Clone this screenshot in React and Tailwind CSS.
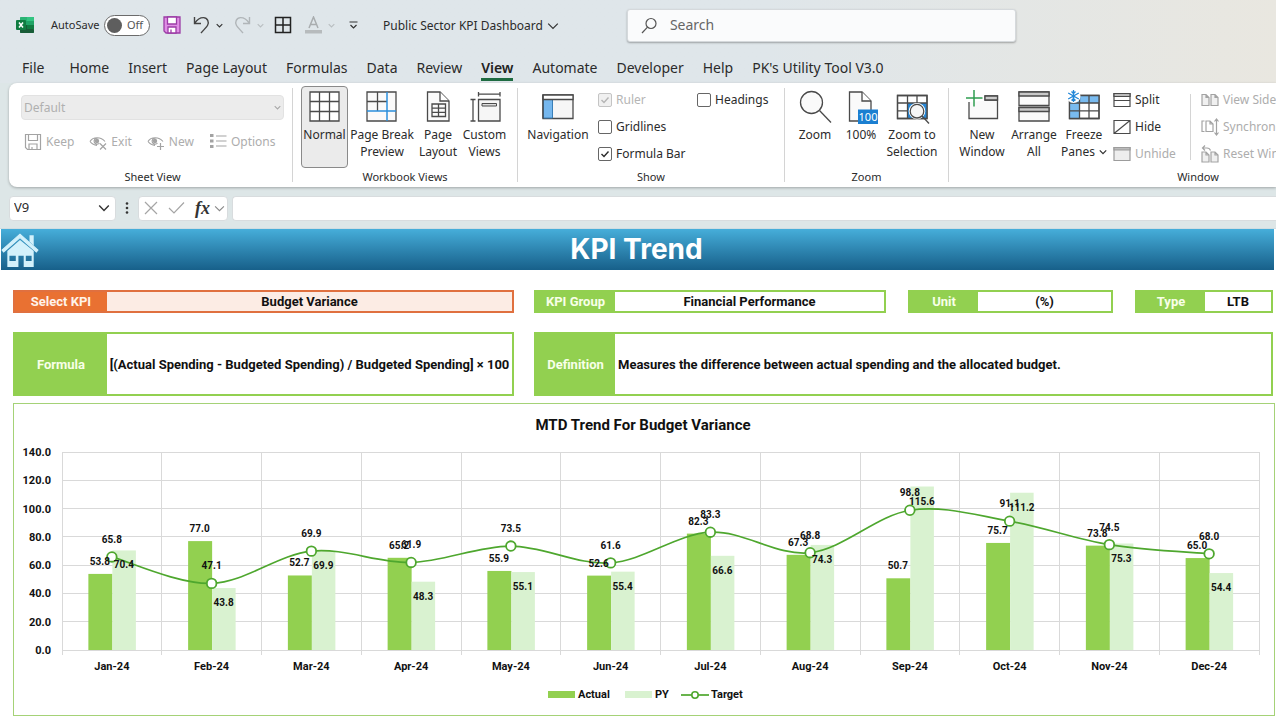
import React from "react";

const INK = "#4a4a4a";
const GREEN = "#92d050";

/* ---------- title bar ---------- */

function Chevron({ size = 10, color = "#333", width = 1.2 }) {
  return (
    <svg width={size} height={size} viewBox="0 0 10 10" fill="none" stroke={color} strokeWidth={width} className="shrink-0" aria-hidden="true">
      <path d="M1 3l4 4 4-4" />
    </svg>
  );
}

function ExcelLogo() {
  return (
    <svg width="18" height="18" viewBox="0 0 18 18" aria-hidden="true" className="shrink-0">
      <rect x="4" y="1" width="14" height="16" rx="1" fill="#21a366" />
      <rect x="4" y="1" width="7" height="4" fill="#33c481" opacity="0.5" />
      <rect x="11" y="1" width="7" height="4" fill="#33c481" />
      <rect x="4" y="9" width="7" height="4" fill="#185c37" />
      <rect x="11" y="9" width="7" height="4" fill="#107c41" />
      <rect x="4" y="13" width="14" height="4" rx="1" fill="#185c37" />
      <rect x="0" y="4" width="10" height="10" rx="1" fill="#107c41" />
      <path d="M3 6.5l4 5M7 6.5l-4 5" stroke="#fff" strokeWidth="1.5" />
    </svg>
  );
}

function TitleBar() {
  return (
    <header className="flex h-[50px] items-center pl-4">
      <ExcelLogo />
      <span id="autosave" className="ml-[17px] w-[47px] whitespace-nowrap text-[11px]">AutoSave</span>
      <button role="switch" aria-checked="false" aria-labelledby="autosave" className="ml-[6px] flex h-[21px] w-[46px] items-center gap-[5px] rounded-full border border-[#6b6b6b] bg-white pl-[2px] text-[11px] text-[#555]">
        <span className="h-[15px] w-[15px] rounded-full bg-[#5e5e5e]" />
        Off
      </button>
      <button aria-label="Save" className="ml-[13px]">
        <svg width="18" height="18" viewBox="0 0 18 18" fill="none" stroke="#9c3da6" strokeWidth="1.3">
          <path d="M1 1h16v16H3l-2-2z" fill="#e08fe6" />
          <path d="M4.5 1v7h9V1z" fill="#fff" />
          <path d="M5 17v-6h8v6z" fill="#fff" />
          <path d="M8 17v-3.500" />
        </svg>
      </button>
      <button aria-label="Undo" className="ml-3">
        <svg width="17" height="18" viewBox="0 0 17 18" fill="none" stroke="#444" strokeWidth="1.400">
          <path d="M1.500 1v6.500h6.500M1.800 7.200C4 3.800 7 1.500 10.500 1.600c4 .2 6 4.500 4 7.900-1.200 2-4 4.500-6.500 7.500" />
        </svg>
      </button>
      <button aria-label="Undo history" className="ml-[6px]"><Chevron size={7} width={1.600} /></button>
      <button aria-label="Redo" disabled className="ml-[11px]">
        <svg width="17" height="18" viewBox="0 0 17 18" fill="none" stroke="#b0b5b8" strokeWidth="1.400">
          <path d="M15.500 1v6.500H9M15.200 7.200C13 3.800 10 1.500 6.500 1.600c-4 .2-6 4.500-4 7.900 1.200 2 4 4.500 6.500 7.500" />
        </svg>
      </button>
      <button aria-label="Redo history" disabled className="ml-[6px]"><Chevron size={7} color="#b9bec1" width={1.600} /></button>
      <button aria-label="Borders" className="ml-[10px]">
        <svg width="18" height="18" viewBox="0 0 18 18" fill="none" stroke="#222" strokeWidth="1.500">
          <path d="M1.500 1.500h15v15h-15zM9 1.500v15M1.500 9h15" />
        </svg>
      </button>
      <button aria-label="Font color" disabled className="ml-[13px]">
        <svg width="17" height="18" viewBox="0 0 17 18" fill="none" stroke="#a9adaf" strokeWidth="1.500">
          <path d="M4 12L8.500 1 13 12M5.500 8.500h6" />
          <rect x="0" y="14" width="17" height="3.500" fill="#b7bbbd" stroke="none" />
        </svg>
      </button>
      <button aria-label="Font color options" disabled className="ml-[6px]"><Chevron size={7} color="#b9bec1" width={1.600} /></button>
      <button aria-label="Customize toolbar" className="ml-[14px]">
        <svg width="9" height="10" viewBox="0 0 9 10" fill="none" stroke="#333" strokeWidth="1.200">
          <path d="M.5 2h8M1.500 5l3 3 3-3" />
        </svg>
      </button>
      <button className="ml-[25px] flex items-center gap-1 whitespace-nowrap pt-[2px] text-xs">
        Public Sector KPI Dashboard
        <Chevron size={12} width={1} />
      </button>
      <label className="ml-[68px] flex h-[33px] w-[389px] items-center rounded-[3px] border border-[#d5d9dc] bg-[#fafbfc] pl-[13px] shadow-[0_1px_2px_rgba(0,0,0,0.3)]">
        <svg width="17" height="17" viewBox="0 0 17 17" fill="none" stroke="#555" strokeWidth="1.200" className="shrink-0" aria-hidden="true">
          <circle cx="10" cy="6.500" r="5" />
          <path d="M6.500 10.200L1 16" />
        </svg>
        <input type="search" aria-label="Search" placeholder="Search" className="ml-3 min-w-0 flex-1 bg-transparent pb-px text-[14px] outline-none placeholder:text-[#666]" />
      </label>
    </header>
  );
}

const TABS = ["Home", "Insert", "Page Layout", "Formulas", "Data", "Review", "View", "Automate", "Developer", "Help", "PK's Utility Tool V3.0"];

function Tabs() {
  return (
    <nav className="flex h-[33px] items-start gap-[19px] whitespace-nowrap pl-[22px] pt-[7px] text-[14px] leading-[21px]">
      <button className="mr-[6px]">File</button>
      {TABS.map((t) => (
        <button key={t} className={t === "View" ? "border-b-[3px] border-[#1e6b41] font-semibold text-[#222]" : ""}>
          {t}
        </button>
      ))}
    </nav>
  );
}

/* ---------- ribbon icons, all on a 34 x 36 field ---------- */

function Big({ children }) {
  return (
    <svg width="34" height="36" viewBox="0 0 34 36" fill="none" stroke={INK} strokeWidth="1.300" className="shrink-0 overflow-visible" aria-hidden="true">
      {children}
    </svg>
  );
}

const NormalIcon = (
  <Big>
    <path d="M2 2h29v29H2z" fill="#fff" />
    <path d="M11.500 2v29M21.500 2v29M2 11.500h29M2 21.500h29" />
  </Big>
);
const PageBreakIcon = (
  <Big>
    <path d="M2 2h29v29H2z" fill="#fafafa" />
    <path d="M12.500 2v19M2 11.500h20" />
    <path d="M22 2v29M2 21h29" stroke="#2b8fdc" strokeWidth="1.500" />
  </Big>
);
const PageLayoutIcon = (
  <Big>
    <path d="M6.500 2H19l9 9v20H6.500z" fill="#fafafa" />
    <path d="M19 2v9h9" fill="#fff" />
    <path d="M11 14h13.500v12.500H11zM17.500 14v12.500M11 18.200h13.500M11 22.400h13.500" />
  </Big>
);
const CustomViewsIcon = (
  <Big>
    <path d="M10.500 9.500h21.500V31H10.500z" fill="#f6f6f6" />
    <path d="M10.500 4.200H32M10.500 2v4.500M32 2v4.500M5 9.500V31M2.500 9.500h5M2.500 31h5" />
    <path d="M14 13.500h14.500V16H14z" fill="#ddd" strokeWidth="1" />
  </Big>
);
const NavigationIcon = (
  <Big>
    <path d="M2 5h30v23.500H2z" fill="#f6f6f6" />
    <path d="M2.500 9.500H11.500v18.500h-9z" fill="#75b7ee" stroke="#3a7fb8" strokeWidth="1" />
    <path d="M2 5h30v4.500H2z" fill="#fff" />
    <path d="M2 5v23.500" />
  </Big>
);
const ZoomIcon = (
  <Big>
    <circle cx="13.500" cy="12.500" r="11" fill="#fafafa" />
    <path d="M21.500 20.500l11.500 12" />
  </Big>
);
const HundredIcon = (
  <Big>
    <path d="M5.500 2H18l9 9v20H5.500z" fill="#fafafa" />
    <path d="M18 2v9h9" fill="#fff" />
    <rect x="14" y="19.500" width="20" height="14.500" fill="#1b7fd1" stroke="none" />
    <text x="24" y="31" textAnchor="middle" fontSize="11" fill="#fff" stroke="none">100</text>
  </Big>
);
const ZoomSelectionIcon = (
  <Big>
    <path d="M2.500 5.500h29.500v23H2.500z" fill="#fff" />
    <path d="M12.500 13h19.500v15.500H12.500z" fill="#2787d6" stroke="none" />
    <path d="M2.500 5.500h29.500v23H2.500zM12.500 5.500v23M22 5.500V13M2.500 13h29.500M2.500 20.800h10" />
    <circle cx="22" cy="21.200" r="6.800" fill="#f6f6f6" stroke="#fff" strokeWidth="3" />
    <circle cx="22" cy="21.200" r="6.800" fill="#f6f6f6" />
    <path d="M27 26l7 7.500" />
  </Big>
);
const NewWindowIcon = (
  <Big>
    <path d="M4 12v16.500h28.500V6H20v4h12.500" fill="#fafafa" />
    <path d="M20 6h12.500v4H20z" fill="#ccc" />
    <path d="M9 0v16.500M1 8h16.500" stroke="#2f9e50" strokeWidth="1.500" />
  </Big>
);
const ArrangeIcon = (
  <Big>
    <path d="M2 2h30v13.500H2zM2 17.500h30v13.500H2z" fill="#fafafa" />
    <path d="M2 2h30v4H2zM2 17.500h30v4H2z" fill="#c8c8c8" />
  </Big>
);
const FreezeIcon = (
  <Big>
    <path d="M2.500 5.500h29.500v23H2.500z" fill="#fff" />
    <path d="M2.500 5.500h29.500V13H12.500v15.500h-10z" fill="#79bbf0" stroke="none" />
    <path d="M2.500 5.500h29.500v23H2.500z" />
    <path d="M12.500 5.500v23M22 5.500v23M2.500 13h29.500M2.500 20.800h29.500" />
    <circle cx="6.500" cy="6" r="7" fill="#fff" stroke="none" />
    <path d="M6.500 0v12M1.200 3l10.600 6M1.200 9l10.600-6M4.500 1.500l2 2 2-2M4.500 10.500l2-2 2 2" stroke="#2287d8" />
  </Big>
);

function Small({ children, color = INK }) {
  return (
    <svg width="18" height="18" viewBox="0 0 18 18" fill="none" stroke={color} strokeWidth="1.200" className="shrink-0" aria-hidden="true">
      {children}
    </svg>
  );
}

const FAINT = "#a3a3a3";
const KeepIcon = (
  <Small color={FAINT}>
    <path d="M1.500 1.500h15v15h-13l-2-2zM4.500 1.500v6h9v-6M5 16.500v-5.500h8v5.500M8 16.500V14" />
  </Small>
);
const EyeShape = <path d="M1 8.500C4 3.500 12 3.500 16 8.500M1 8.500c2 2.500 4 3.700 7 3.800M8.500 5.200a3 3 0 1 0 2 4.800" />;
const ExitIcon = (
  <Small color={FAINT}>
    {EyeShape}
    <circle cx="8" cy="8" r="1.600" fill={FAINT} />
    <path d="M11 10.500l6 6M17 10.500l-6 6" />
  </Small>
);
const NewIcon = (
  <Small color={FAINT}>
    {EyeShape}
    <circle cx="8" cy="8" r="1.600" fill={FAINT} />
    <path d="M13.500 10v7M10 13.500h7" />
  </Small>
);
const OptionsIcon = (
  <Small color={FAINT}>
    <path d="M1 2.500h3.500M1 8h3.500M1 13.500h3.500" strokeWidth="3.200" />
    <path d="M7 3h10.500M7 8h10.500M7 13h10.500" />
  </Small>
);
const SplitIcon = (
  <Small>
    <path d="M1 2.500h16v13H1z" fill="#fff" />
    <path d="M1 2.500h16v3H1z" fill="#bbb" />
    <path d="M1 9.500h16" />
  </Small>
);
const HideIcon = (
  <Small>
    <path d="M1 2.500h16v13H1zM1 15.500l16-13" />
  </Small>
);
const UnhideIcon = (
  <Small color="#9c9c9c">
    <path d="M1 2.500h16v13H1z" fill="#eee" />
    <path d="M1 2.500h16v2.500H1z" fill="#bbb" />
  </Small>
);
const SideIcon = (
  <Small color={FAINT}>
    <path d="M1 3.500h4l3 3v8H1zM10 3.500h4l3 3v8h-7zM5 3.500v3h3M14 3.500v3h3" fill="#f0f0f0" />
  </Small>
);
const SyncIcon = (
  <Small color={FAINT}>
    <path d="M3.500 3H1v10.500h2.500M5 3h4l3 3v7.500H5zM9 3v3h3M15.500 1v16M13.500 3.500l2-2.500 2 2.500M13.500 14.500l2 2.500 2-2.500" />
  </Small>
);
const ResetIcon = (
  <Small color={FAINT}>
    <path d="M1 7h4l3 3v7H1zM10 7h4l3 3v7h-7zM5 7v3h3M14 7v3h3" fill="#f0f0f0" />
    <path d="M4 .5L1.500 3 4 5.500M1.500 3H6c2 0 3 .8 3.500 2.500" />
  </Small>
);

/* ---------- ribbon ---------- */

function Group({ label, className, children }) {
  return (
    <section aria-label={label} className={`flex shrink-0 flex-col ${className}`}>
      <div className="flex h-[82px]">{children}</div>
      <h2 className="text-center text-[11px] leading-[18px]">{label}</h2>
    </section>
  );
}

function Divider() {
  return <div className="my-[2px] h-[94px] w-px shrink-0 bg-[#d4d4d4]" />;
}

function BigButton({ icon, lines, width, active, menu }) {
  return (
    <button
      aria-pressed={active}
      className={`flex h-[82px] flex-col items-center whitespace-nowrap text-xs leading-[17px] ${width} ${
        active ? "rounded-[4px] border border-[#8a8a8a] bg-[#ebebeb] pt-[3px]" : "pt-1"
      }`}
    >
      {icon}
      {lines.map((l, i) => (
        <span key={l} className="flex items-center gap-1">
          {l}
          {menu && i === lines.length - 1 && <Chevron size={8} width={1.600} />}
        </span>
      ))}
    </button>
  );
}

function SmallButton({ icon, children, disabled }) {
  return (
    <button disabled={disabled} className="flex h-[27px] items-center gap-[4px] whitespace-nowrap text-xs disabled:text-[#adadad]">
      {icon}
      {children}
    </button>
  );
}

function Check({ children, ...rest }) {
  return (
    <label className="flex h-[27px] items-center gap-[4px] whitespace-nowrap text-xs has-disabled:text-[#b5b5b5]">
      <span className="grid h-[14px] w-[14px] shrink-0">
        <input
          type="checkbox"
          className="peer col-start-1 row-start-1 h-[14px] w-[14px] appearance-none rounded-[2px] border border-[#666] bg-white disabled:border-[#c4c4c4] disabled:bg-[#f0f0f0]"
          {...rest}
        />
        <svg viewBox="0 0 14 14" fill="none" stroke="currentColor" strokeWidth="1.400" className="pointer-events-none invisible col-start-1 row-start-1 h-[14px] w-[14px] peer-checked:visible" aria-hidden="true">
          <path d="M3.500 7l2.500 2.500 4.500-5" />
        </svg>
      </span>
      {children}
    </label>
  );
}

function Ribbon() {
  return (
    <div className="ml-[9px] flex h-[104px] overflow-hidden rounded-l-[8px] bg-white pt-[3px] shadow-[0_1px_3px_rgba(0,0,0,0.28)]">
      <Group label="Sheet View" className="w-[283px] pl-3 pr-2">
        <div className="flex flex-1 flex-col pt-[9px]">
          <div className="grid h-[25px] w-[263px] items-center">
            <select disabled aria-label="Sheet view" className="col-start-1 row-start-1 h-[25px] appearance-none rounded-[4px] border border-[#e2e2e2] bg-[#ececec] pl-[2px] text-xs text-[#b0b0b0] opacity-100">
              <option>Default</option>
            </select>
            <span className="pointer-events-none col-start-1 row-start-1 mr-[3px] justify-self-end">
              <Chevron size={7} color="#a8a8a8" width={1.500} />
            </span>
          </div>
          <div className="mt-2 flex gap-[15px] pl-[3px]">
            <SmallButton disabled icon={KeepIcon}>Keep</SmallButton>
            <SmallButton disabled icon={ExitIcon}>Exit</SmallButton>
            <SmallButton disabled icon={NewIcon}>New</SmallButton>
            <SmallButton disabled icon={OptionsIcon}>Options</SmallButton>
          </div>
        </div>
      </Group>
      <Divider />
      <Group label="Workbook Views" className="w-[224px]">
        <div className="flex pl-2">
          <BigButton active icon={NormalIcon} lines={["Normal"]} width="w-[47px]" />
          <BigButton icon={PageBreakIcon} lines={["Page Break", "Preview"]} width="w-[68px]" />
          <BigButton icon={PageLayoutIcon} lines={["Page", "Layout"]} width="w-[44px]" />
          <BigButton icon={CustomViewsIcon} lines={["Custom", "Views"]} width="w-[49px]" />
        </div>
      </Group>
      <Divider />
      <Group label="Show" className="w-[266px]">
        <BigButton icon={NavigationIcon} lines={["Navigation"]} width="w-[80px]" />
        <div className="flex w-[99px] flex-col">
          <Check checked disabled readOnly>Ruler</Check>
          <Check>Gridlines</Check>
          <Check defaultChecked>Formula Bar</Check>
        </div>
        <div>
          <Check>Headings</Check>
        </div>
      </Group>
      <Divider />
      <Group label="Zoom" className="w-[163px]">
        <div className="flex pl-[6px]">
          <BigButton icon={ZoomIcon} lines={["Zoom"]} width="w-[48px]" />
          <BigButton icon={HundredIcon} lines={["100%"]} width="w-[44px]" />
          <BigButton icon={ZoomSelectionIcon} lines={["Zoom to", "Selection"]} width="w-[58px]" />
        </div>
      </Group>
      <Divider />
      <Group label="Window" className="w-[498px]">
        <div className="flex pl-[6px]">
          <BigButton icon={NewWindowIcon} lines={["New", "Window"]} width="w-[54px]" />
          <BigButton icon={ArrangeIcon} lines={["Arrange", "All"]} width="w-[50px]" />
          <BigButton menu icon={FreezeIcon} lines={["Freeze", "Panes"]} width="w-[50px]" />
          <div className="ml-[4px] flex w-[77px] flex-col">
            <SmallButton icon={SplitIcon}>Split</SmallButton>
            <SmallButton icon={HideIcon}>Hide</SmallButton>
            <SmallButton disabled icon={UnhideIcon}>Unhide</SmallButton>
          </div>
          <div className="mr-[10px] mt-2 h-[66px] w-px bg-[#d4d4d4]" />
          <div className="flex flex-col">
            <SmallButton disabled icon={SideIcon}>View Side by Side</SmallButton>
            <SmallButton disabled icon={SyncIcon}>Synchronous Scrolling</SmallButton>
            <SmallButton disabled icon={ResetIcon}>Reset Window Position</SmallButton>
          </div>
        </div>
      </Group>
    </div>
  );
}

function FormulaBar() {
  return (
    <div className="flex h-[41px] items-center pl-[9px] pt-px">
      <div className="flex h-[25px] w-[107px] items-center rounded-[4px] border border-[#d8dcde] bg-white pl-1 pr-[5px]">
        <input aria-label="Name box" defaultValue="V9" className="min-w-0 flex-1 bg-transparent text-[13px] outline-none" />
        <Chevron size={12} width={1.200} />
      </div>
      <svg width="4" height="12" viewBox="0 0 4 12" fill="#333" className="mx-[9px] shrink-0" aria-hidden="true">
        <circle cx="2" cy="1.500" r="1.300" />
        <circle cx="2" cy="6" r="1.300" />
        <circle cx="2" cy="10.500" r="1.300" />
      </svg>
      <div className="flex h-[25px] w-[90px] items-center rounded-[4px] border border-[#d8dcde] bg-white pl-[5px]">
        <button aria-label="Cancel">
          <svg width="14" height="14" viewBox="0 0 14 14" fill="none" stroke="#a5a5a5" strokeWidth="1.200"><path d="M1 1l12 12M13 1L1 13" /></svg>
        </button>
        <button aria-label="Enter" className="ml-[10px]">
          <svg width="17" height="14" viewBox="0 0 17 14" fill="none" stroke="#a5a5a5" strokeWidth="1.200"><path d="M1 7l5 5L16 1.500" /></svg>
        </button>
        <button aria-label="Insert function" className="ml-[10px] flex items-center gap-[4px] font-['Liberation_Serif',serif] text-[18px] font-bold italic leading-5 text-[#333]">
          fx
          <Chevron size={11} color="#888" width={1} />
        </button>
      </div>
      <input aria-label="Formula bar" className="ml-1 h-[25px] min-w-0 flex-1 rounded-l-[4px] border border-r-0 border-[#d8dcde] bg-white px-2 text-xs outline-none" />
    </div>
  );
}

/* ---------- worksheet ---------- */

function Banner() {
  return (
    <div className="ml-px mr-[2px] flex h-[41px] items-center bg-linear-to-b from-[#46aeda] to-[#17608a]">
      <a href="#home" aria-label="Home">
        <svg width="38" height="36" viewBox="0 0 36 34" fill="#d3f1fb">
          <path d="M27 3h4v10l-4-4z" />
          <path d="M18 2L1 17l1.500 1.800L18 5.200l15.500 13.600L35 17z" stroke="#d3f1fb" />
          <path fillRule="evenodd" d="M18 7.500L6 18v15h10.500V22.500h5V33H31V18zM8 22.500h6v5H8zM23.500 22.500h5.500v5h-5.500z" />
        </svg>
      </a>
      <h1 className="flex-1 pr-[40px] text-center font-['Inter',sans-serif] text-[28px] font-bold leading-[41px] text-white">KPI Trend</h1>
    </div>
  );
}

function Field({ label, children, width, align = "justify-center" }) {
  return (
    <dl className="flex border-2 border-[#92d050]">
      <dt className={`flex shrink-0 items-center justify-center bg-[#92d050] text-[#f8ffe8] ${width}`}>{label}</dt>
      <dd className={`flex flex-1 items-center whitespace-nowrap ${align}`}>{children}</dd>
    </dl>
  );
}

function Fields() {
  return (
    <div className="ml-[13px] mr-[3px] mt-5 grid grid-cols-[501fr_739fr] gap-x-5 gap-y-[19px] text-[13px] font-bold leading-[19px] text-[#111]">
      <div className="flex border-2 border-[#e0703f]">
        <label htmlFor="kpi" className="w-[92px] bg-[#e97132] text-center text-[#fff3ea]">Select KPI</label>
        <select id="kpi" className="min-w-0 flex-1 appearance-none bg-[#fcece4] text-center [text-align-last:center] outline-none">
          <option>Budget Variance</option>
        </select>
      </div>
      <div className="grid grid-cols-[352fr_205fr_138fr] gap-x-[22px]">
        <Field label="KPI Group" width="w-[79px]">Financial Performance</Field>
        <Field label="Unit" width="w-[68px]">(%)</Field>
        <Field label="Type" width="w-[68px]">LTB</Field>
      </div>
      <div className="grid h-16">
        <Field label="Formula" width="w-[92px]">[(Actual Spending - Budgeted Spending) / Budgeted Spending] × 100</Field>
      </div>
      <div className="grid h-16">
        <Field label="Definition" width="w-[79px]" align="justify-start pl-[3px]">
          Measures the difference between actual spending and the allocated budget.
        </Field>
      </div>
    </div>
  );
}

const DATA = [
  ["Jan-24", 53.8, 70.4, 65.8],
  ["Feb-24", 77.0, 43.8, 47.1],
  ["Mar-24", 52.7, 69.9, 69.9],
  ["Apr-24", 65.2, 48.3, 61.9],
  ["May-24", 55.9, 55.1, 73.5],
  ["Jun-24", 52.6, 55.4, 61.6],
  ["Jul-24", 82.3, 66.6, 83.3],
  ["Aug-24", 67.3, 74.3, 68.8],
  ["Sep-24", 50.7, 115.6, 98.8],
  ["Oct-24", 75.7, 111.2, 91.1],
  ["Nov-24", 73.8, 75.3, 74.5],
  ["Dec-24", 65.0, 54.4, 68.0],
];

const LEFT = 48;
const RIGHT = 1245;
const BASE = 246;
const TOP = 48;
const STEP = (RIGHT - LEFT) / DATA.length;
const yOf = (v) => BASE - (v * (BASE - TOP)) / 140;
const cx = (i) => LEFT + STEP * (i + 0.5);

function smoothPath(points) {
  let d = `M${points[0][0]} ${points[0][1]}`;
  for (let i = 0; i < points.length - 1; i++) {
    const p0 = points[i - 1] || points[i];
    const p1 = points[i];
    const p2 = points[i + 1];
    const p3 = points[i + 2] || p2;
    d += `C${p1[0] + (p2[0] - p0[0]) / 6} ${p1[1] + (p2[1] - p0[1]) / 6} ${p2[0] - (p3[0] - p1[0]) / 6} ${p2[1] - (p3[1] - p1[1]) / 6} ${p2[0]} ${p2[1]}`;
  }
  return d;
}

function TrendChart() {
  const line = DATA.map((d, i) => [cx(i), yOf(d[3])]);
  return (
    <figure className="ml-[13px] mr-px mt-[7px] border border-[#a5d277]">
      <svg viewBox="0 0 1260 311" className="block h-auto w-full font-['Roboto',sans-serif]" fontWeight="700" fill="#111" textAnchor="middle" role="img" aria-label="MTD Trend For Budget Variance">
        <text x="629" y="26" fontSize="15">MTD Trend For Budget Variance</text>
        <g stroke="#d9d9d9" shapeRendering="crispEdges">
          {[0, 20, 40, 60, 80, 100, 120, 140].map((v) => (
            <path key={v} d={`M${LEFT} ${yOf(v)}H${RIGHT}`} />
          ))}
          {Array.from({ length: 13 }, (_, i) => (
            <path key={i} d={`M${LEFT + STEP * i} ${TOP}V${BASE + 5}`} />
          ))}
        </g>
        {[0, 20, 40, 60, 80, 100, 120, 140].map((v) => (
          <text key={v} x="37" y={yOf(v) + 4} fontSize="11" textAnchor="end">{v.toFixed(1)}</text>
        ))}
        {DATA.map(([m, a, p], i) => (
          <g key={m}>
            <rect x={cx(i) - 23.5} y={yOf(a)} width="24" height={BASE - yOf(a)} fill={GREEN} />
            <rect x={cx(i) + 0.5} y={yOf(p)} width="23.500" height={BASE - yOf(p)} fill="#d9f2d0" />
            <text x={cx(i)} y="266" fontSize="11">{m}</text>
          </g>
        ))}
        <path d={smoothPath(line)} fill="none" stroke="#4ea72e" strokeWidth="1.700" />
        {line.map(([x, y], i) => (
          <circle key={i} cx={x} cy={y} r="4.800" fill="#fff" stroke="#4ea72e" strokeWidth="1.800" />
        ))}
        <g fontSize="10">
          {DATA.map(([m, a, p, t], i) => (
            <g key={m}>
              <text x={cx(i) - 12} y={yOf(a) - 9}>{a.toFixed(1)}</text>
              <text x={cx(i) + 12} y={yOf(p) + 18}>{p.toFixed(1)}</text>
              <text x={cx(i)} y={yOf(t) - 14}>{t.toFixed(1)}</text>
            </g>
          ))}
        </g>
        <g fontSize="11" textAnchor="start">
          <rect x="534" y="287" width="27" height="7" fill={GREEN} />
          <text x="564" y="294">Actual</text>
          <rect x="611" y="287" width="27" height="7" fill="#d9f2d0" />
          <text x="641" y="294">PY</text>
          <path d="M667 291h28" stroke="#4ea72e" strokeWidth="1.700" />
          <circle cx="681" cy="291" r="3.200" fill="#fff" stroke="#4ea72e" strokeWidth="1.600" />
          <text x="697" y="294">Target</text>
        </g>
      </svg>
    </figure>
  );
}

export default function App() {
  return (
    <div className="min-h-screen overflow-hidden bg-linear-to-r from-[#dfe6ea] from-60% to-[#e9e7e0] font-['Noto_Sans',sans-serif] text-[#2b2b2b]">
      <TitleBar />
      <Tabs />
      <div className="bg-[#dde6e7]">
        <Ribbon />
        <FormulaBar />
      </div>
      <main className="border-t border-[#cfdde2] bg-white pb-1 font-['Roboto',sans-serif]">
        <Banner />
        <Fields />
        <TrendChart />
      </main>
    </div>
  );
}
